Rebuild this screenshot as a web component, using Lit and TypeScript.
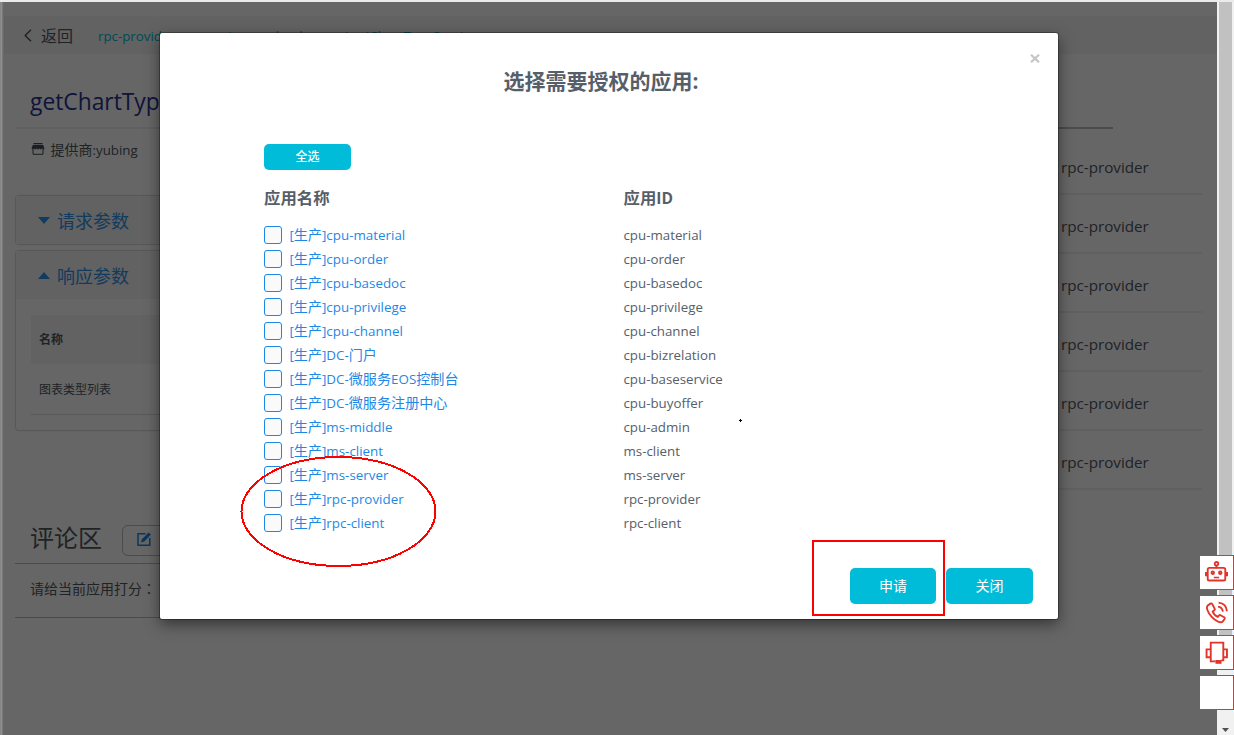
import { LitElement, html, svg, css } from "lit";
import { customElement, property } from "lit/decorators.js";

interface App {
  name: string;
  id: string;
}

const ENV = "[生产]";

const APPS: App[] = [
  { name: "cpu-material", id: "cpu-material" },
  { name: "cpu-order", id: "cpu-order" },
  { name: "cpu-basedoc", id: "cpu-basedoc" },
  { name: "cpu-privilege", id: "cpu-privilege" },
  { name: "cpu-channel", id: "cpu-channel" },
  { name: "DC-门户", id: "cpu-bizrelation" },
  { name: "DC-微服务EOS控制台", id: "cpu-baseservice" },
  { name: "DC-微服务注册中心", id: "cpu-buyoffer" },
  { name: "ms-middle", id: "cpu-admin" },
  { name: "ms-client", id: "ms-client" },
  { name: "ms-server", id: "ms-server" },
  { name: "rpc-provider", id: "rpc-provider" },
  { name: "rpc-client", id: "rpc-client" },
];

const CONSUMERS = Array.from({ length: 6 }, () => "rpc-provider");

// Latin runs are set slightly smaller than the Chinese text around them.
const mixed = (text: string) =>
  text
    .split(/([\x20-\x7e]+)/)
    .filter((run) => run)
    .map((run) => (/^[\x20-\x7e]/.test(run) ? html`<span class="latin">${run}</span>` : run));

const base = css`
  * { box-sizing: border-box; }
  :host { font-family: "Open Sans", "Noto Sans CJK SC", sans-serif; }
  .latin { font-size: 0.95em; }
`;

@customElement("service-page")
class ServicePage extends LitElement {
  static styles = [
    base,
    css`
      :host { display: flex; flex-direction: column; width: 1217px; height: 733px; padding-top: 14px; background: #fff; color: #505860; overflow: hidden; }
      .bar { display: flex; align-items: center; flex: none; height: 38px; padding-left: 24px; background: #f5f5f5; border-radius: 4px; font-size: 16px; }
      .bar svg { width: 8px; height: 13px; margin-right: 9px; }
      .crumb { display: flex; justify-content: space-between; width: 379px; margin-left: 25px; padding-top: 1px; font-size: 14px; color: #00bcd4; white-space: nowrap; }
      .cols { display: flex; justify-content: space-between; padding: 0 15px; }
      .main { width: 760px; }
      .title { height: 75px; padding: 28px 15px 0; line-height: 38px; font-size: 24px; color: #283593; border-bottom: 2px solid #eee; }
      .provider { display: flex; align-items: center; height: 40px; padding: 0 16px; margin-bottom: 26px; font-size: 14px; }
      .provider svg { width: 14px; height: 12px; margin-right: 5.5px; }
      .panel { border: 1px solid #dcdcdc; border-radius: 4px; margin-bottom: 5px; box-shadow: 0 0 1px #ccc; }
      .head { display: flex; align-items: center; height: 48px; padding-left: 22px; background: #f5f5f5; font-size: 18px; color: #2f93e8; }
      .head svg { width: 12px; height: 7px; margin-right: 7px; }
      .panel-body { padding: 16px 15px 15px; font-size: 12px; }
      .th { height: 49px; line-height: 50px; padding-left: 8px; background: #f5f5f5; font-weight: 700; }
      .td { height: 51px; line-height: 52px; padding-left: 8px; border-bottom: 1px solid #ddd; }
      .comments { display: flex; align-items: center; height: 52px; margin-top: 81px; padding-left: 15px; border-bottom: 1px solid #bbb; font-size: 24px; }
      .heading { margin-top: -3px; }
      .write { display: flex; align-items: center; width: 110px; height: 31px; margin-left: 20px; margin-top: 5px; padding-left: 14px; border: 1px solid #bbb; border-radius: 6px; }
      .write svg { width: 14px; height: 14px; margin-top: -2px; }
      .rate { height: 54px; line-height: 48px; padding-left: 15px; border-bottom: 1px solid #bbb; font-size: 14px; }
      .colon { font-family: "Noto Sans CJK TC", sans-serif; }
      .side { width: 400px; }
      .tabs { width: 311px; height: 75px; border-bottom: 2px solid #bfbfbf; margin-bottom: 7px; }
      .item { height: 59px; padding-left: 259px; line-height: 62px; font-size: 16px; border-bottom: 2px solid #f1f1f1; }
    `,
  ];

  render() {
    return html`
      <div class="bar">
        <svg viewBox="0 0 8 13"><path d="M7 .8 1.2 6.5 7 12.2" fill="none" stroke="#505860" stroke-width="1.5" /></svg>
        返回
        <div class="crumb">${mixed("rpc-provider")}${mixed("com.primeton.loader.service.IChartTypeService")}</div>
      </div>
      <div class="cols">
        <div class="main">
          <div class="title">${mixed("getChartTypeList")}</div>
          <div class="provider">
            <svg viewBox="0 0 13 12">
              <path d="M2 0h9v1.3H2zM1.3 2h10.4L13 5.4 12 6.6 10.7 5.6 9.3 6.6 8 5.6 6.5 6.6 5 5.6 3.7 6.6 2.3 5.6 1 6.6 0 5.4z" fill="#454c55" />
              <path d="M1.5 6v5.3h10V6" fill="none" stroke="#454c55" />
            </svg>
            <span>${mixed("提供商:yubing")}</span>
          </div>
          <div class="panel">
            <div class="head"><svg viewBox="0 0 12 7"><path d="M0 0h12L6 7z" fill="#2f93e8" /></svg>请求参数</div>
          </div>
          <div class="panel">
            <div class="head"><svg viewBox="0 0 12 7"><path d="M0 7h12L6 0z" fill="#2f93e8" /></svg>响应参数</div>
            <div class="panel-body">
              <div class="th">名称</div>
              <div class="td">图表类型列表</div>
            </div>
          </div>
          <div class="comments">
            <span class="heading">评论区</span>
            <div class="write">
              <svg viewBox="0 0 14 14">
                <path d="M8.5 1.7H1v11.6h11.8V6" fill="none" stroke="#1e88e5" stroke-width="1.5" />
                <path d="M3.8 10.6 5 7.2 11.6.6 14 2.6 7.3 9.4z" fill="#1e88e5" />
              </svg>
            </div>
          </div>
          <div class="rate">请给当前应用打分<span class="colon">：</span></div>
        </div>
        <div class="side">
          <div class="tabs"></div>
          ${CONSUMERS.map((name) => html`<div class="item">${mixed(name)}</div>`)}
        </div>
      </div>
    `;
  }
}

@customElement("grant-dialog")
class GrantDialog extends LitElement {
  static styles = [
    base,
    css`
      :host { display: flex; flex-direction: column; width: 898px; height: 586px; background: #fff; border-radius: 2px; box-shadow: 0 0 0 1px rgba(0, 0, 0, 0.3), 0 5px 15px rgba(0, 0, 0, 0.5); color: #565e69; }
      .close { align-self: flex-end; height: 9px; margin: 21px 18px 0 0; }
      .close svg { display: block; width: 10px; height: 9px; }
      .title { height: 36px; text-align: center; line-height: 36px; font-size: 21px; font-weight: 700; padding-right: 16px; }
      .btn { display: flex; align-items: center; justify-content: center; width: 87px; height: 36px; padding: 0 0 2px; background: #00bcd9; border-radius: 5px; color: #fff; font-size: 14px; }
      .apply { width: 86px; }
      .all { height: 26px; font-size: 12px; font-weight: 500; margin: 45px 0 0 104px; }
      .row { display: grid; grid-template-columns: 359.5px 1fr; height: 24px; padding-left: 104px; align-items: center; font-size: 14px; line-height: 24px; }
      .row.header { font-size: 16.4px; font-weight: 700; margin: 16px 0 13px; }
      .name { display: flex; align-items: center; color: #1e88e5; font-size: 14.1px; }
      .box { width: 18px; height: 18px; margin-right: 7.4px; border: 1px solid #1e88e5; border-radius: 3px; background: #fafafa; }
      .actions { display: flex; gap: 10px; justify-content: flex-end; margin: 33px 25px 0 0; }
    `,
  ];

  render() {
    return html`
      <div class="close"><svg viewBox="0 0 10 9"><path d="M1 .7 9 8.3M9 .7 1 8.3" stroke="#c6c6c6" stroke-width="2.2" /></svg></div>
      <div class="title">选择需要授权的应用:</div>
      <div class="btn all">全选</div>
      <div class="row header"><span>应用名称</span><span>${mixed("应用ID")}</span></div>
      ${APPS.map(
        (app) => html`<div class="row">
          <div class="name"><span class="box"></span><span>${mixed(ENV + app.name)}</span></div>
          <span>${mixed(app.id)}</span>
        </div>`
      )}
      <div class="actions">
        <div class="btn apply">申请</div>
        <div class="btn">关闭</div>
      </div>
    `;
  }
}

const robot = svg`
  <circle cx="11" cy="2.6" r="1.7" /><path d="M11 4v3" /><rect x="2.6" y="6.6" width="16.8" height="12" rx="1.5" />
  <path d="M1 10.5v4M21 10.5v4" stroke-width="2.4" /><circle cx="7.4" cy="11.2" r="1.2" /><circle cx="14.6" cy="11.2" r="1.2" /><path d="M8.5 15.8h5" stroke-width="1.5" />`;
const phone = svg`
  <path d="M5.2 2.5 2.6 4.3C.8 6 2.6 11 6.4 15.2c3.9 4.2 8.8 6.3 10.5 4.5l1.8-2.5c.4-.6.2-1.2-.4-1.6l-3.4-2c-.6-.4-1.2-.2-1.6.3l-1.1 1.3c-1.8-.6-4.2-3.2-4.8-5l1.5-1.3c.5-.4.6-1 .3-1.6L7 3C6.6 2.2 5.9 2 5.2 2.5z" />
  <path d="M12.5 5.4q4 .5 4.6 4.8M13 1.6q7.3.8 8 8.2" />`;
const headset = svg`
  <path d="M5.5 17.5V1.5h12v17h-2M5.5 8H1.500v7.500h4M17.500 8h3.500v7.500h-3.500M5.500 16v3.500H10" stroke-linejoin="miter" />
  <path d="M10 20h5.800" stroke-width="3.600" />`;

@customElement("app-root")
class AppRoot extends LitElement {
  static styles = [
    base,
    css`
      :host { display: flex; position: relative; width: 1234px; height: 735px; padding-top: 2px; background: #e9ebec; overflow: hidden; }
      .scroll { display: flex; flex-direction: column; justify-content: space-between; align-items: center; width: 17px; height: 733px; background: #f1f1f1; }
      .thumb { width: 13px; height: 636px; background: #c1c1c1; }
      .scroll svg { width: 7px; height: 4px; margin-bottom: 3px; }
      .overlay { position: absolute; left: 0; top: 2px; width: 1217px; height: 733px; padding: 31px 0 0 160px; background: rgba(0, 0, 0, 0.6); }
      .edge { position: absolute; left: 0; top: 2px; width: 4px; height: 733px; background: linear-gradient(90deg, #858787 0 1px, #8e9090 1px 2px, #777 2px 3px, #6a6a6a 3px); }
      .tools { position: absolute; left: 1199px; top: 555px; display: flex; flex-direction: column; gap: 5px; }
      .tool { display: flex; align-items: center; justify-content: center; width: 35px; height: 35px; background: #fff; border: 1px solid #e1352b; }
      .tool svg { width: 23px; height: 23px; fill: none; stroke: #e1352b; stroke-width: 1.8; }
      .marks { position: absolute; left: 0; top: 0; }
    `,
  ];

  @property({ type: Boolean }) open = true;

  render() {
    return html`
      <service-page></service-page>
      <div class="scroll">
        <div class="thumb"></div>
        <svg viewBox="0 0 7 4"><path d="M0 0h7L3.5 4z" fill="#505050" /></svg>
      </div>
      <div class="overlay"><grant-dialog></grant-dialog></div>
      <div class="edge"></div>
      <div class="tools">
        ${[robot, phone, headset, null].map(
          (icon) => html`<div class="tool">${icon ? html`<svg viewBox="0 0 22 22">${icon}</svg>` : null}</div>`
        )}
      </div>
      <svg class="marks" width="1234" height="735" fill="none" stroke="#f00" stroke-width="2" shape-rendering="crispEdges">
        <ellipse cx="338.5" cy="511.5" rx="97" ry="54.5" />
        <rect x="813" y="541" width="131" height="74" />
        <path d="M739 420.5h3M740.5 419v3" stroke="#000" stroke-width="1" />
      </svg>
    `;
  }
}
